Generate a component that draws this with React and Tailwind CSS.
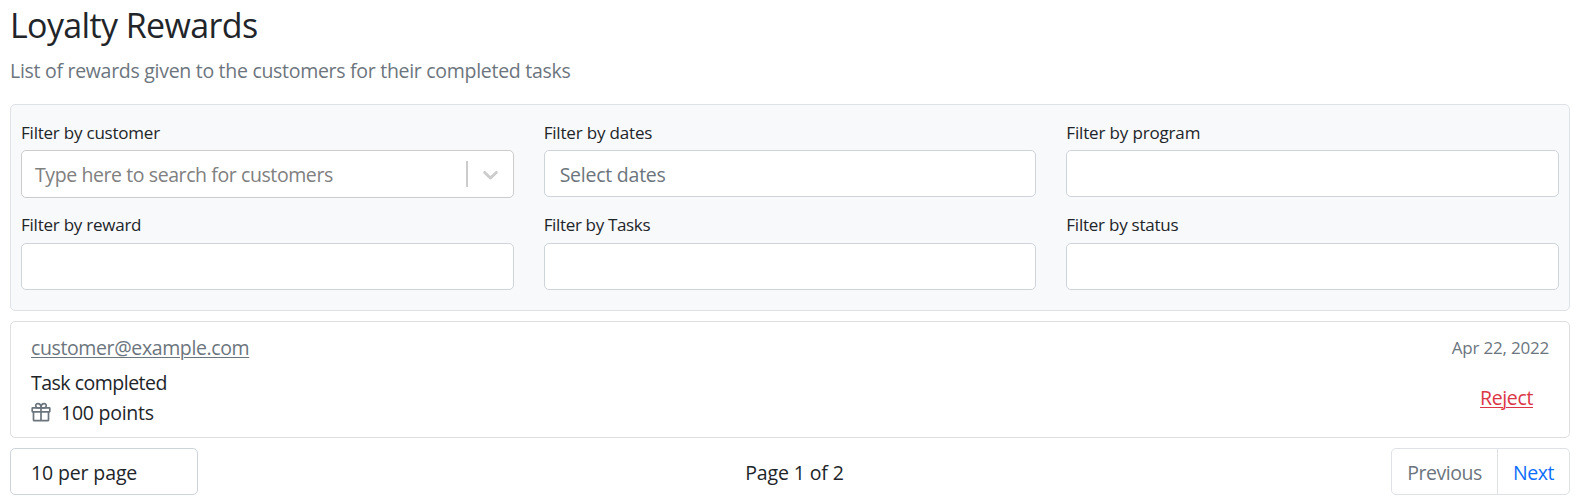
const LABEL = "text-[17px] leading-[26px] whitespace-nowrap";
const BOX = "rounded-[5px] border border-[#ced4da] bg-white";

function Field({ label, tracking, spacing = "pt-px mb-1", children }) {
  return (
    <div className="flex flex-col">
      <label className={`${LABEL} ${tracking} ${spacing}`}>{label}</label>
      {children || <div className={`${BOX} h-[47px]`} />}
    </div>
  );
}

function CustomerSelect() {
  return (
    <div className="flex h-12 items-center rounded-[5px] border border-[#cccccc] bg-white">
      <span className="flex-1 pt-px pl-[13px] leading-[30px] tracking-[-0.41px] text-[#808080]">
        Type here to search for customers
      </span>
      <span className="h-[26px] w-0.5 bg-[#cccccc]" />
      <span className="px-[10px] text-[#cccccc]">
        <svg width="25" height="25" viewBox="0 0 20 20" fill="currentColor">
          <path d="M4.516 7.548c0.436-0.446 1.043-0.481 1.576 0l3.908 3.747 3.908-3.747c0.533-0.481 1.141-0.446 1.574 0 0.436 0.445 0.408 1.197 0 1.615-0.406 0.418-4.695 4.502-4.695 4.502-0.217 0.223-0.502 0.335-0.787 0.335s-0.57-0.112-0.789-0.335c0 0-4.287-4.084-4.695-4.502s-0.436-1.17 0-1.615z" />
        </svg>
      </span>
    </div>
  );
}

function GiftIcon() {
  return (
    <svg className="-mt-0.5 mr-[10px] size-5 text-[#6c757d]" viewBox="0 0 20 20" fill="none" stroke="currentColor" strokeWidth="1.7" strokeLinejoin="round">
      <rect x="1.2" y="5.9" width="17.6" height="3.9" rx="0.5" />
      <path d="M2.5 9.8v8.1a0.8 0.8 0 0 0 0.8 0.8h13.4a0.8 0.8 0 0 0 0.8-0.8V9.8M10 5.9v12.8" />
      <path d="M10 5.9H6.9C4.2 5.9 3.9 1.6 6.8 1.6 8.8 1.6 10 3.4 10 5.9ZM10 5.9h3.1C15.8 5.9 16.1 1.6 13.2 1.6 11.2 1.6 10 3.4 10 5.9Z" />
    </svg>
  );
}

export default function App() {
  return (
    <main className="h-[502px] overflow-hidden bg-white pt-1 pr-[7px] pl-[10px] font-['Open_Sans','Noto_Sans',sans-serif] text-[19.5px] text-[#212529]">
      <h1 className="mb-[10px] text-[34px] leading-[42px] tracking-[-0.63px]">Loyalty Rewards</h1>
      <p className="mb-[18px] leading-[30px] tracking-[-0.29px] text-[#6c757d]">
        List of rewards given to the customers for their completed tasks
      </p>

      <section className="grid h-[207px] grid-cols-3 grid-rows-[79px_78px] gap-x-[30px] gap-y-[14px] rounded-[5px] border border-[#dee2e6] bg-[#f8f9fa] px-[10px] pt-[14px]">
        <Field label="Filter by customer" tracking="tracking-[-0.22px]">
          <CustomerSelect />
        </Field>
        <Field label="Filter by dates" tracking="tracking-[-0.18px]">
          <div className={`${BOX} flex h-[47px] items-center pt-0.5 pl-[15px] leading-[30px] tracking-[-0.24px] text-[#6c757d]`}>
            Select dates
          </div>
        </Field>
        <Field label="Filter by program" tracking="tracking-[-0.16px]" />
        <Field label="Filter by reward" tracking="tracking-[-0.24px]" spacing="mb-[5px]" />
        <Field label="Filter by Tasks" tracking="tracking-[-0.34px]" spacing="mb-[5px]" />
        <Field label="Filter by status" tracking="tracking-[-0.24px]" spacing="mb-[5px]" />
      </section>

      <article className="mt-[10px] flex h-[117px] justify-between rounded-[5px] border border-[#dfdfdf] px-5 pt-[11px]">
        <div className="flex flex-col leading-[30px]">
          <a className="tracking-[-0.38px] text-[#6c757d] underline decoration-1 underline-offset-2">customer@example.com</a>
          <span className="mt-[5px] tracking-[-0.5px]">Task completed</span>
          <span className="flex items-center">
            <GiftIcon />
            <span className="tracking-[-0.25px]">100 points</span>
          </span>
        </div>
        <div className="flex flex-col items-end">
          <span className="text-[17px] leading-[30px] tracking-[-0.2px] text-[#6c757d]">Apr 22, 2022</span>
          <a className="mt-5 mr-4 leading-[30px] tracking-[-0.36px] text-[#dc3545] underline decoration-1 underline-offset-2">Reject</a>
        </div>
      </article>

      <footer className="mt-[10px] grid grid-cols-[188px_1fr_188px] items-center leading-[30px]">
        <div className={`${BOX} flex h-[47px] items-center pt-0.5 pl-5 tracking-[-0.13px]`}>10 per page</div>
        <span className="pt-0.5 pl-[9px] text-center tracking-[-0.12px]">Page 1 of 2</span>
        <nav className="flex h-[47px] w-[179px] items-stretch justify-self-end rounded-[5px] border border-[#dee2e6]">
          <span className="flex w-[106px] items-center justify-center border-r border-[#dee2e6] pt-0.5 tracking-[-0.48px] text-[#6c757d]">Previous</span>
          <span className="flex flex-1 items-center justify-center pt-0.5 tracking-[-0.5px] text-[#0d6efd]">Next</span>
        </nav>
      </footer>
    </main>
  );
}
